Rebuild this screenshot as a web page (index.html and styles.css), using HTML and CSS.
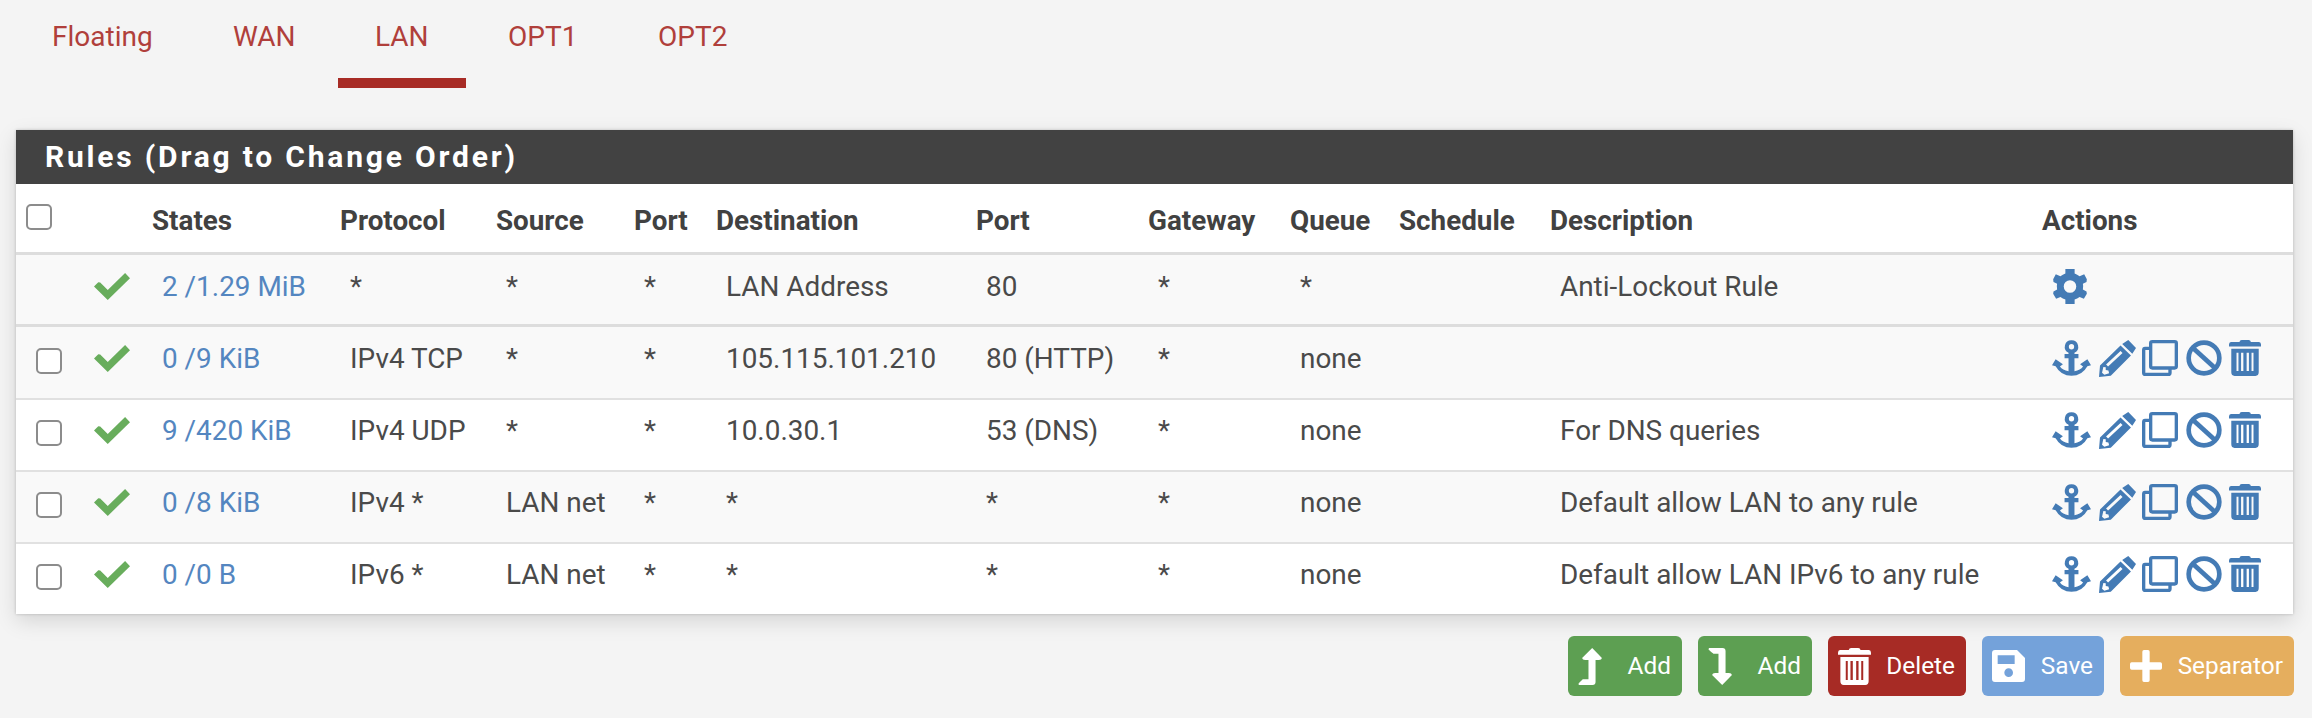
FILE: index.html
```
<!DOCTYPE html>
<html lang="en">
<head>
<meta charset="utf-8">
<title>Firewall Rules</title>
<link rel="stylesheet" href="styles.css">
</head>
<body>
<svg class="sprite" aria-hidden="true">
  <symbol id="check" viewBox="0 0 110 82"><path d="M13 28 0 41 42 82 110 16 95 0 42 52 19 29Z"/></symbol>
  <symbol id="gear" viewBox="0 0 102 106"><path fill-rule="evenodd" d="M37 0H65V14Q73 17 80 22L94 16 102 31 101 39 90 45Q92 53 90 62L101 68 102 75 93 90 80 85Q73 90 65 92V106H37V92Q29 90 22 85L9 90 0 75 1 68 12 62Q10 53 12 45L1 39 0 31 8 16 22 22Q29 17 37 14ZM51 34A19 19 0 1 0 51 72 19 19 0 1 0 51 34Z"/></symbol>
  <symbol id="anchor" viewBox="0 0 118 108"><path fill-rule="evenodd" d="M59 0A20 20 0 0 1 68 38V42H80V55H68V94Q86 91 94 80L85 73 107 58 118 76 107 79Q91 108 59 108T11 79L0 76 11 58 33 73 24 80Q32 91 50 94V55H38V42H50V38A20 20 0 0 1 59 0ZM59 12A8 8 0 1 0 59 28 8 8 0 1 0 59 12Z"/></symbol>
  <symbol id="pencil" viewBox="0 0 110 110"><path fill-rule="evenodd" d="M87 0 110 24 99 41 69 12ZM64 16 95 46 35 106 0 110 3 76ZM64 33 21 73 27 79 70 39ZM13 80 9 97 16 103 30 99 28 91 20 89 20 81Z"/></symbol>
  <symbol id="copy" viewBox="0 0 108 108"><path fill="none" stroke="currentColor" stroke-width="10" stroke-linejoin="round" d="M31 5H98Q103 5 103 10V79Q103 84 98 84H31Q26 84 26 79V10Q26 5 31 5ZM23 25H9Q5 25 5 30V98Q5 103 10 103H79Q84 103 84 98V87"/></symbol>
  <symbol id="ban" viewBox="0 0 108 108"><g fill="none" stroke="currentColor" stroke-width="14"><circle cx="54" cy="54" r="46"/><path d="M21 24 87 84"/></g></symbol>
  <symbol id="trash" viewBox="0 0 98 110"><path fill-rule="evenodd" d="M32 6Q33 0 39 0H60Q66 0 67 6H92Q98 7 98 14V20H0V14Q0 7 6 6ZM7 27H91V99Q91 110 81 110H17Q7 110 7 99ZM23 39V95H29V39ZM37 39V95H44V39ZM54 39V95H61V39ZM69 39V95H75V39Z"/></symbol>
  <symbol id="up" viewBox="0 0 71 110"><path d="M42 0 71 30Q70 36 62 36H52V101Q52 110 43 110H3Q0 108 2 105L14 93H31V36H21Q13 36 12 30Z"/></symbol>
  <symbol id="down" viewBox="0 0 71 110"><path d="M3 0H43Q52 0 52 9V74H62Q70 74 71 80L42 110 12 80Q13 74 21 74H31V17H16Q12 15 1 4Z"/></symbol>
  <symbol id="save" viewBox="0 0 99 96"><path fill-rule="evenodd" d="M9 0H75L99 24V87Q99 96 90 96H9Q0 96 0 87V9Q0 0 9 0ZM17 16V42H68V16ZM50 55A13 13 0 1 0 50 81 13 13 0 1 0 50 55Z"/></symbol>
  <symbol id="plus" viewBox="0 0 96 96"><path d="M42 0H54Q59 0 59 5V37H91Q96 37 96 42V54Q96 59 91 59H59V91Q59 96 54 96H42Q37 96 37 91V59H5Q0 59 0 54V42Q0 37 5 37H37V5Q37 0 42 0Z"/></symbol>
</svg>

<nav class="tabs">
  <a class="tab tab-floating">Floating</a>
  <a class="tab tab-wan">WAN</a>
  <a class="tab tab-lan active">LAN</a>
  <a class="tab tab-opt1">OPT1</a>
  <a class="tab tab-opt2">OPT2</a>
</nav>

<section class="panel">
  <h2 class="panel-title"><span>Rules (Drag to Change Order)</span></h2>
  <table class="rules">
    <colgroup>
      <col class="c-box"><col class="c-check"><col class="c-states"><col class="c-protocol"><col class="c-source"><col class="c-port"><col class="c-dest"><col class="c-dport"><col class="c-gateway"><col class="c-queue"><col class="c-schedule"><col class="c-desc"><col class="c-actions">
    </colgroup>
    <thead>
      <tr><th><span class="box"></span></th><th></th><th>States</th><th>Protocol</th><th>Source</th><th>Port</th><th>Destination</th><th>Port</th><th>Gateway</th><th>Queue</th><th>Schedule</th><th>Description</th><th>Actions</th></tr>
    </thead>
    <tbody class="fixed">
      <tr><td></td><td><svg class="check"><use href="#check"/></svg></td><td class="link">2 /1.29 MiB</td><td>*</td><td>*</td><td>*</td><td>LAN Address</td><td>80</td><td>*</td><td>*</td><td></td><td>Anti-Lockout Rule</td><td><svg class="gear"><use href="#gear"/></svg></td></tr>
    </tbody>
    <tbody class="user">
      <tr><td><span class="box"></span></td><td><svg class="check"><use href="#check"/></svg></td><td class="link">0 /9 KiB</td><td>IPv4 TCP</td><td>*</td><td>*</td><td>105.115.101.210</td><td>80 (HTTP)</td><td>*</td><td>none</td><td></td><td></td><td><div class="actions"><svg class="anchor"><use href="#anchor"/></svg><svg class="pencil"><use href="#pencil"/></svg><svg class="copy"><use href="#copy"/></svg><svg class="ban"><use href="#ban"/></svg><svg class="trash"><use href="#trash"/></svg></div></td></tr>
      <tr><td><span class="box"></span></td><td><svg class="check"><use href="#check"/></svg></td><td class="link">9 /420 KiB</td><td>IPv4 UDP</td><td>*</td><td>*</td><td>10.0.30.1</td><td>53 (DNS)</td><td>*</td><td>none</td><td></td><td>For DNS queries</td><td><div class="actions"><svg class="anchor"><use href="#anchor"/></svg><svg class="pencil"><use href="#pencil"/></svg><svg class="copy"><use href="#copy"/></svg><svg class="ban"><use href="#ban"/></svg><svg class="trash"><use href="#trash"/></svg></div></td></tr>
      <tr><td><span class="box"></span></td><td><svg class="check"><use href="#check"/></svg></td><td class="link">0 /8 KiB</td><td>IPv4 *</td><td>LAN net</td><td>*</td><td>*</td><td>*</td><td>*</td><td>none</td><td></td><td>Default allow LAN to any rule</td><td><div class="actions"><svg class="anchor"><use href="#anchor"/></svg><svg class="pencil"><use href="#pencil"/></svg><svg class="copy"><use href="#copy"/></svg><svg class="ban"><use href="#ban"/></svg><svg class="trash"><use href="#trash"/></svg></div></td></tr>
      <tr><td><span class="box"></span></td><td><svg class="check"><use href="#check"/></svg></td><td class="link">0 /0 B</td><td>IPv6 *</td><td>LAN net</td><td>*</td><td>*</td><td>*</td><td>*</td><td>none</td><td></td><td>Default allow LAN IPv6 to any rule</td><td><div class="actions"><svg class="anchor"><use href="#anchor"/></svg><svg class="pencil"><use href="#pencil"/></svg><svg class="copy"><use href="#copy"/></svg><svg class="ban"><use href="#ban"/></svg><svg class="trash"><use href="#trash"/></svg></div></td></tr>
    </tbody>
  </table>
</section>

<div class="buttons">
  <button class="btn add-top"><svg><use href="#up"/></svg><span>Add</span></button>
  <button class="btn add-end"><svg><use href="#down"/></svg><span>Add</span></button>
  <button class="btn delete"><svg><use href="#trash"/></svg><span>Delete</span></button>
  <button class="btn save"><svg><use href="#save"/></svg><span>Save</span></button>
  <button class="btn separator"><svg><use href="#plus"/></svg><span>Separator</span></button>
</div>
</body>
</html>
```
FILE: styles.css
```
* { box-sizing: border-box; }
body {
  margin: 0;
  width: 2312px;
  height: 718px;
  overflow: hidden;
  background: #f4f4f4;
  color: #4a4a4a;
  font: 27.9px/36px Roboto, sans-serif;
}
svg { display: block; fill: currentColor; flex: none; }
.sprite { display: none; }

.tabs { display: flex; height: 88px; padding-left: 15px; }
.tab {
  padding: 19px 0 0 37px;
  color: #b03f3b;
  white-space: nowrap;
  font-size: 28px;
}
.tab.active { border-bottom: 10px solid #a72b25; }
.tab-floating { width: 180px; }
.tab-wan { width: 143px; padding-left: 38px; }
.tab-lan { width: 128px; }
.tab-opt1 { width: 155px; padding-left: 42px; }
.tab-opt2 { width: 150px; }

.panel {
  width: 2277px;
  height: 484px;
  margin: 42px 0 0 16px;
  background: #fff;
  box-shadow: 0 0 3px rgba(0, 0, 0, .2), 0 7px 20px rgba(0, 0, 0, .13);
}
.panel-title {
  margin: 0;
  height: 54px;
  padding: 9px 0 0 29px;
  background: #424242;
  color: #fff;
  font-size: 30px;
  font-weight: 700;
  line-height: 36px;
  letter-spacing: 2.8px;
}

.rules { width: 2277px; table-layout: fixed; border-collapse: separate; border-spacing: 0; }
.c-box { width: 68px; }
.c-check { width: 58px; }
.c-states { width: 188px; }
.c-protocol { width: 156px; }
.c-source { width: 138px; }
.c-port { width: 82px; }
.c-dest { width: 260px; }
.c-dport { width: 172px; }
.c-gateway { width: 142px; }
.c-queue { width: 109px; }
.c-schedule { width: 151px; }
.c-desc { width: 492px; }
.c-actions { width: 261px; }
th, td { text-align: left; vertical-align: top; white-space: nowrap; }
th { height: 68px; padding: 19px 0 0 10px; color: #414141; font-weight: 700; font-size: 27.8px; }
td { height: 72px; padding: 13px 0 0 20px; border-top: 2px solid #e1e1e1; }
.fixed td, .user tr:first-child td { border-top: 3px solid #dddddd; padding-top: 14px; }
.user tr:first-child td { height: 74px; }
.fixed td, .user tr:nth-child(odd) td { background: #f9f9f9; }
td.link { color: #5486c0; }
.box {
  display: block;
  width: 26px;
  height: 26px;
  border: 2px solid #8c8c8c;
  border-radius: 5px;
  background: #fff;
}
th .box { margin-top: 1px; }
td .box { margin-top: 7px; }
.check { width: 36px; height: 27px; margin: 4px 0 0 -10px; color: #68ad5c; }

.gear, .actions { color: #447bb5; }
.gear { width: 34px; height: 35px; margin-left: 1px; }
.actions { display: flex; align-items: center; height: 36px; margin-top: -1px; }
.anchor { width: 39px; height: 36px; margin-right: 8px; }
.pencil { width: 37px; height: 37px; margin-right: 6px; }
.copy { width: 36px; height: 36px; margin-right: 8px; }
.ban { width: 36px; height: 36px; margin-right: 7px; }
.trash { width: 32px; height: 36px; }

.buttons { display: flex; justify-content: flex-end; gap: 16px; padding: 22px 18px 0 0; }
.btn {
  display: flex;
  align-items: center;
  justify-content: space-between;
  height: 60px;
  padding: 0 11px 0 10px;
  border: 0;
  border-radius: 6px;
  color: #fff;
  font: 24.4px/36px Roboto, sans-serif;
}
.btn svg { height: 37px; }
.add-top { width: 114px; background: #5d9f52; }
.add-end { width: 114px; background: #5d9f52; }
.add-top svg, .add-end svg { width: 24px; }
.delete { width: 138px; background: #a72b25; }
.delete svg { width: 33px; }
.save { width: 122px; background: #74a2da; }
.save svg { width: 33px; height: 32px; }
.separator { width: 174px; background: #e5ae5e; }
.separator svg { width: 32px; height: 32px; }
```
